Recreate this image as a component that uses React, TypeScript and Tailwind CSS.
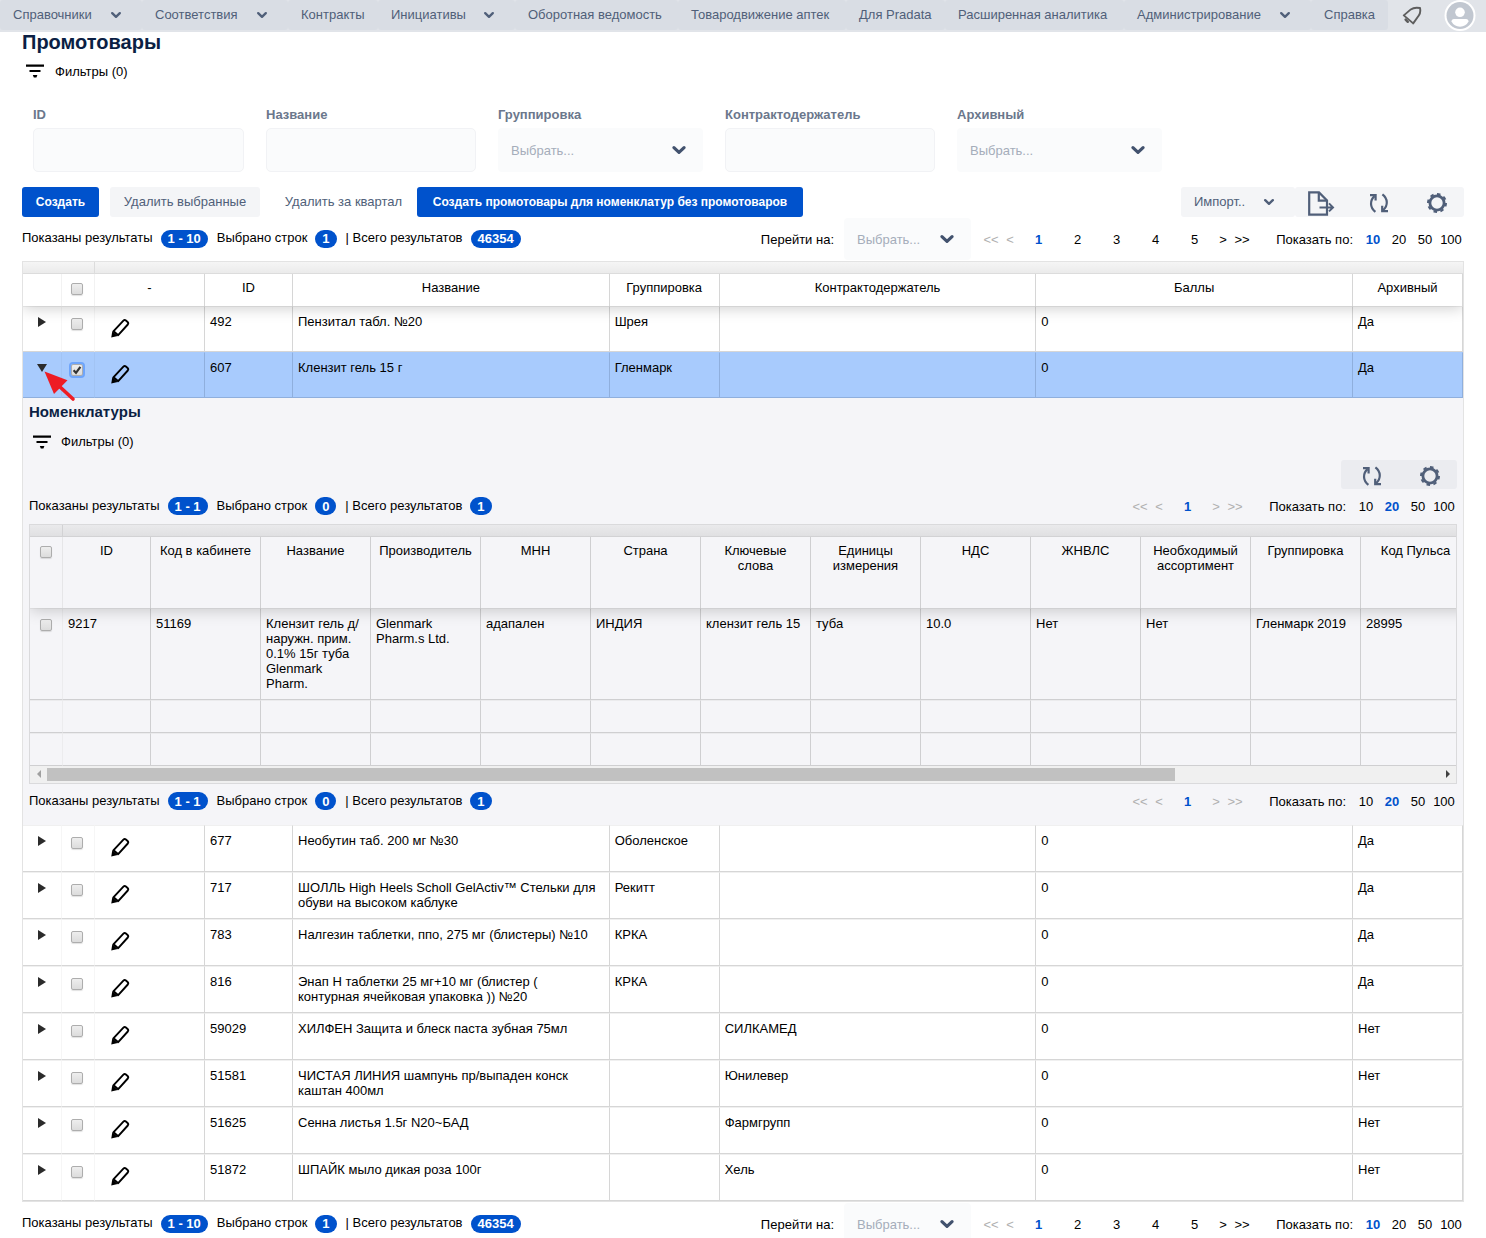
import React from "react";

type NavItem = { label: string; width: string; menu?: boolean };

const NAV: NavItem[] = [
  { label: "Справочники", width: "w-[142px]", menu: true },
  { label: "Соответствия", width: "w-[146px]", menu: true },
  { label: "Контракты", width: "w-[90px]" },
  { label: "Инициативы", width: "w-[137px]", menu: true },
  { label: "Оборотная ведомость", width: "w-[163px]" },
  { label: "Товародвижение аптек", width: "w-[168px]" },
  { label: "Для Pradata", width: "w-[99px]" },
  { label: "Расширенная аналитика", width: "w-[179px]" },
  { label: "Администрирование", width: "w-[187px]", menu: true },
  { label: "Справка", width: "w-[77px]" },
];

type Product = { id: string; name: string; group: string; holder: string; points: string; archived: string };

const TOP_ROWS: Product[] = [
  { id: "492", name: "Пензитал табл. №20", group: "Шрея", holder: "", points: "0", archived: "Да" },
];

const OPEN_ROW: Product = { id: "607", name: "Клензит гель 15 г", group: "Гленмарк", holder: "", points: "0", archived: "Да" };

const BOTTOM_ROWS: Product[] = [
  { id: "677", name: "Необутин таб. 200 мг №30", group: "Оболенское", holder: "", points: "0", archived: "Да" },
  { id: "717", name: "ШОЛЛЬ High Heels Scholl GelActiv™ Стельки для обуви на высоком каблуке", group: "Рекитт", holder: "", points: "0", archived: "Да" },
  { id: "783", name: "Налгезин таблетки, ппо, 275 мг (блистеры) №10", group: "КРКА", holder: "", points: "0", archived: "Да" },
  { id: "816", name: "Энап Н таблетки 25 мг+10 мг (блистер ( контурная ячейковая упаковка )) №20", group: "КРКА", holder: "", points: "0", archived: "Да" },
  { id: "59029", name: "ХИЛФЕН Защита и блеск паста зубная 75мл", group: "", holder: "СИЛКАМЕД", points: "0", archived: "Нет" },
  { id: "51581", name: "ЧИСТАЯ ЛИНИЯ шампунь пр/выпаден конск каштан 400мл", group: "", holder: "Юнилевер", points: "0", archived: "Нет" },
  { id: "51625", name: "Сенна листья 1.5г N20~БАД", group: "", holder: "Фармгрупп", points: "0", archived: "Нет" },
  { id: "51872", name: "ШПАЙК мыло дикая роза 100г", group: "", holder: "Хель", points: "0", archived: "Нет" },
];

const MAIN_HEADERS = ["-", "ID", "Название", "Группировка", "Контрактодержатель", "Баллы", "Архивный"];

const NESTED_HEADERS = [
  "ID", "Код в кабинете", "Название", "Производитель", "МНН", "Страна", "Ключевые слова",
  "Единицы измерения", "НДС", "ЖНВЛС", "Необходимый ассортимент", "Группировка", "Код Пульса",
];

const NESTED_ROW = [
  "9217", "51169", "Клензит гель д/наружн. прим. 0.1% 15г туба Glenmark Pharm.", "Glenmark Pharm.s Ltd.", "адапален",
  "ИНДИЯ", "клензит гель 15", "туба", "10.0", "Нет", "Нет", "Гленмарк 2019", "28995",
];

function Chevron({ className }: { className: string }) {
  return (
    <svg viewBox="0 0 12 12" className={className} fill="none" stroke="currentColor" strokeWidth="2.4" strokeLinecap="round" strokeLinejoin="round" aria-hidden="true">
      <path d="M2.2 4.2L6 7.8l3.8-3.6" />
    </svg>
  );
}

function FilterIcon() {
  return (
    <svg viewBox="0 0 20 16" className="h-4 w-5" aria-hidden="true">
      <path d="M1 2.6h18M4.5 8h11" stroke="#000" strokeWidth="2.2" fill="none" />
      <path d="M7.8 12h4.6l-1 2.4H8.8z" fill="#000" />
    </svg>
  );
}

function PencilIcon() {
  return (
    <svg viewBox="0 0 20 20" className="size-5" aria-hidden="true">
      <path d="M3.6 13.2L13.4 2.6Q14.6 1.4 15.9 2.5L17.6 4Q18.8 5.2 17.8 6.5L8.2 17.2Z" fill="none" stroke="#000" strokeWidth="1.9" strokeLinejoin="round" />
      <path d="M1.2 19.4L2.4 13 7.8 18Z" fill="#000" />
    </svg>
  );
}

function ExportIcon() {
  return (
    <svg viewBox="0 0 28 26" className="h-[26px] w-7" fill="none" stroke="#505f79" strokeWidth="2.2" aria-hidden="true">
      <path d="M2.2 2.4H12L20 10.4V24.6H2.2Z" />
      <path d="M11.8 2.4V10.6H20" />
      <path d="M12.5 17.4H26M22 13.4l4 4-4 4" strokeWidth="2" />
    </svg>
  );
}

function RefreshIcon() {
  return (
    <svg viewBox="0 0 20 20" className="size-5" fill="none" stroke="#505f79" strokeWidth="2.2" aria-hidden="true">
      <path d="M5.6 3.2C0.6 7.4 0.8 14.6 6.4 18.8" />
      <path d="M1 2.2H6.6V7.4" />
      <path d="M13.4 1.4C19 5.6 19.2 12.6 14.2 17" />
      <path d="M13.2 12.8V18.2H19" />
    </svg>
  );
}

function GearIcon() {
  return (
    <svg viewBox="0 0 20 20" className="size-5" fill="none" stroke="#505f79" aria-hidden="true">
      <circle cx="10" cy="10" r="7.1" strokeWidth="2.8" />
      <circle cx="10" cy="10" r="9" strokeWidth="2" pathLength="16" strokeDasharray="1 1" />
    </svg>
  );
}

function BellIcon() {
  return (
    <svg viewBox="0 0 20 20" className="size-5" fill="none" stroke="#5d5d5d" strokeWidth="1.9" strokeLinejoin="round" strokeLinecap="round" aria-hidden="true">
      <path d="M1.8 9.4L8.8 3.4Q12 1 18 2Q19 7 16.6 9.8L11.2 17.4Z" />
      <path d="M3.6 13.6l2.2 2.2" strokeWidth="2.4" />
    </svg>
  );
}

function Avatar() {
  return (
    <svg viewBox="0 0 32 32" className="size-8" aria-hidden="true">
      <circle cx="16" cy="15.5" r="15.5" fill="#fff" />
      <circle cx="16" cy="15.5" r="13.5" fill="#c1c7d0" />
      <circle cx="16" cy="12.3" r="4.8" fill="#fff" />
      <path d="M7.5 21.5q0-2.5 2.5-2.5h12q2.5 0 2.5 2.5q-2.5 5-8.5 5.2q-6-.2-8.5-5.2z" fill="#fff" />
    </svg>
  );
}

function Checkbox({ label, checked = false }: { label: string; checked?: boolean }) {
  return (
    <span className="relative inline-flex size-3">
      <input
        type="checkbox"
        aria-label={label}
        defaultChecked={checked}
        className="peer size-3 appearance-none rounded-[2px] border border-[#adadad] bg-linear-to-b from-[#eeeeee] to-[#dcdcdc] shadow-[0_1px_1px_rgba(0,0,0,0.12)] checked:outline-2 checked:outline-[#6ea5fb]"
      />
      <svg viewBox="0 0 12 12" className="pointer-events-none absolute inset-0 hidden size-3 peer-checked:block" fill="none" stroke="#333" strokeWidth="2.2" aria-hidden="true">
        <path d="M2.6 6.2l2.4 2.6 4.4-6" />
      </svg>
    </span>
  );
}

function FieldSelect({ id, className }: { id: string; className: string }) {
  return (
    <div className={`relative ${className}`}>
      <select id={id} className="size-full appearance-none rounded-[4px] bg-[#fafbfc] pl-[13px] text-[13px] text-[#a5adba]">
        <option>Выбрать...</option>
      </select>
      <Chevron className="pointer-events-none absolute top-1/2 right-4 size-4 -translate-y-1/2 text-[#42526e]" />
    </div>
  );
}

function Badge({ children }: { children: React.ReactNode }) {
  return <span className="mt-[2px] flex h-[18px] items-center rounded-full bg-[#0052cc] px-[7px] font-bold text-white">{children}</span>;
}

function ResultsBar({ range, selected, total, pages, size, jumpId, className }: {
  range: string; selected: string; total: string; pages: string[]; size: string; jumpId?: string; className: string;
}) {
  const last = pages.length === 1;
  const forward = last ? "text-[#b0b0b0]" : "text-black";
  return (
    <div className={`flex items-center justify-between ${className}`}>
      <div className="flex items-center gap-2 pb-[3px] whitespace-nowrap">
        <span>Показаны результаты</span>
        <Badge>{range}</Badge>
        <span className="ml-px">Выбрано строк</span>
        <Badge>{selected}</Badge>
        <span className="ml-px">| Всего результатов</span>
        <Badge>{total}</Badge>
      </div>
      <div className="flex h-full items-center whitespace-nowrap">
        {jumpId && (
          <>
            <label htmlFor={jumpId} className="mr-[10px]">Перейти на:</label>
            <FieldSelect id={jumpId} className="mr-[10px] h-[42px] w-[127px]" />
          </>
        )}
        <button className="w-5 text-[#b0b0b0]">&lt;&lt;</button>
        <button className="w-[18px] text-[#b0b0b0]">&lt;</button>
        {pages.map((p) => (
          <button key={p} className={p === "1" ? "w-[39px] font-bold text-[#0052cc]" : "w-[39px]"}>{p}</button>
        ))}
        <button className={`w-[18px] ${forward}`}>&gt;</button>
        <button className={`w-5 ${forward}`}>&gt;&gt;</button>
        <span className="w-[108px] pr-[7px] text-right">Показать по:</span>
        {["10", "20", "50", "100"].map((n) => (
          <button key={n} className={n === size ? "w-[26px] font-bold text-[#0052cc]" : "w-[26px]"}>{n}</button>
        ))}
      </div>
    </div>
  );
}

function ProductRow({ row, open = false }: { row: Product; open?: boolean }) {
  const line = open
    ? "border-t-[#a8cbfd] border-r-[#8fafdd] border-b-[#8fafdd]"
    : "border-t-[#f0f0f0] border-r-[#d6d6d6] border-b-[#d6d6d6]";
  const faint = open
    ? "border-t-[#a8cbfd] border-r-[#a2c4f4] border-b-[#8fafdd]"
    : "border-t-[#f0f0f0] border-r-[#f6f6f6] border-b-[#d6d6d6]";
  const edges = "border-t border-r border-b align-top";
  const cell = `${edges} px-[5px] pt-[7px] ${line}`;
  return (
    <tr className={open ? "h-[46px] bg-[#a8cbfd]" : "h-[47px] first:h-[46px]"}>
      <td className={`relative pt-[10px] ${edges} ${faint}`}>
        <button aria-label={open ? "Свернуть" : "Развернуть"} className="mx-auto flex h-[10px] w-3 items-center justify-center">
          <svg viewBox="0 0 10 10" className={open ? "size-[10px] rotate-90" : "size-[10px]"} aria-hidden="true">
            <path d="M1 0L9 5 1 10z" fill="#2b2b2b" />
          </svg>
        </button>
        {open && (
          <svg viewBox="0 0 32 31" className="absolute top-[18px] left-[21px] z-10 h-[31px] w-8" aria-hidden="true">
            <path d="M15 15L29 28" stroke="#ee1c24" strokeWidth="3.6" strokeLinecap="round" />
            <path d="M0.5 0.5L23.5 9.2 10 23z" fill="#ee1c24" />
          </svg>
        )}
      </td>
      <td className={`${edges} ${faint}`}>
        <div className="flex justify-center pt-[11px] pr-[2px]">
          <Checkbox label={`Выбрать ${row.id}`} checked={open} />
        </div>
      </td>
      <td className={`${edges} ${line}`}>
        <button aria-label={`Редактировать ${row.id}`} className="mt-[11px] ml-[15px] flex">
          <PencilIcon />
        </button>
      </td>
      <td className={cell}>{row.id}</td>
      <td className={`${edges} pt-[7px] pr-[10px] pl-[5px] ${line}`}>{row.name}</td>
      <td className={cell}>{row.group}</td>
      <td className={cell}>{row.holder}</td>
      <td className={cell}>{row.points}</td>
      <td className={cell}>{row.archived}</td>
    </tr>
  );
}

function NomenclatureTable() {
  const cell = "border-r border-r-[#cfcfd1] px-[5px] align-top";
  const rowEdges = "border-t border-b border-t-[#ebebed] border-b-[#cfcfd1]";
  return (
    <div className="border border-[#dadadc]">
      <div className="overflow-hidden">
        <table className="w-[1441px] table-fixed border-separate border-spacing-0">
          <colgroup>
            <col className="w-[33px]" />
            <col className="w-[88px]" />
            {NESTED_HEADERS.slice(1).map((h) => <col key={h} className="w-[110px]" />)}
          </colgroup>
          <thead className="relative z-10 bg-[#f5f5f8] shadow-[0_2px_15px_rgba(0,0,0,0.2)]">
            <tr className="h-3 bg-linear-to-b from-[#eaeaec] to-[#dfdfe1]">
              <td className="border-r border-b border-[#d2d2d4]" />
              <td colSpan={13} className="border-b border-[#d2d2d4]" />
            </tr>
            <tr className="h-[71px]">
              <th className="border-r border-[#e6e6e8] align-top">
                <div className="flex justify-center pt-[9px]"><Checkbox label="Выбрать все номенклатуры" /></div>
              </th>
              {NESTED_HEADERS.map((h) => (
                <th key={h} className={`${cell} pt-[6px] text-center font-normal`}>{h}</th>
              ))}
            </tr>
          </thead>
          <tbody>
            <tr className="h-[92px]">
              <td className={`border-r border-r-[#ececee] align-top ${rowEdges}`}>
                <div className="flex justify-center pt-[10px]"><Checkbox label="Выбрать 9217" /></div>
              </td>
              {NESTED_ROW.map((v, i) => <td key={i} className={`${cell} ${rowEdges} pt-[7px]`}>{v}</td>)}
            </tr>
            {[0, 1].map((r) => (
              <tr key={r} className="h-[33px]">
                <td className={`border-r border-r-[#ececee] ${rowEdges}`} />
                {NESTED_HEADERS.map((h) => <td key={h} className={`${cell} ${rowEdges}`} />)}
              </tr>
            ))}
          </tbody>
        </table>
      </div>
      <div className="flex h-[17px] items-center bg-[#f0f0f0] pb-px">
        <button aria-label="Прокрутить влево" className="flex w-[17px] justify-center">
          <svg viewBox="0 0 4 8" className="h-2 w-1" aria-hidden="true"><path d="M4 0v8L0 4z" fill="#a0a0a0" /></svg>
        </button>
        <div className="h-[13px] flex-1">
          <div className="h-full w-[81%] bg-[#c1c1c1]" />
        </div>
        <button aria-label="Прокрутить вправо" className="flex w-[17px] justify-center">
          <svg viewBox="0 0 4 8" className="h-2 w-1" aria-hidden="true"><path d="M0 0v8l4-4z" fill="#404040" /></svg>
        </button>
      </div>
    </div>
  );
}

function Nomenclatures() {
  return (
    <section className="px-[6px] pb-[6px]">
      <h2 className="flex h-7 items-center pb-px text-[15px] font-bold text-[#0b1f44]">Номенклатуры</h2>
      <button className="flex h-8 items-center gap-[9px] pb-px pl-[3px]">
        <FilterIcon />
        Фильтры (0)
      </button>
      <div className="mt-[2px] flex justify-end">
        <div className="flex h-[29px] rounded-[3px] bg-[#ebecf0]">
          <button aria-label="Обновить" className="flex w-[62px] items-center justify-center pt-[2px]"><RefreshIcon /></button>
          <button aria-label="Настройки" className="flex w-[54px] items-center justify-center pt-[2px]"><GearIcon /></button>
        </div>
      </div>
      <ResultsBar range="1 - 1" selected="0" total="1" pages={["1"]} size="20" className="h-[35px]" />
      <NomenclatureTable />
      <ResultsBar range="1 - 1" selected="0" total="1" pages={["1"]} size="20" className="h-[35px]" />
    </section>
  );
}

export default function App() {
  const allPages = ["1", "2", "3", "4", "5"];
  const label = "flex h-5 items-center font-bold text-[#6b778c]";
  const input = "mt-1 h-11 w-full rounded-[5px] border border-[#f1f2f5] bg-[#fafbfc] px-3 outline-none";
  return (
    <div className="bg-white font-['Liberation_Sans',Arial,sans-serif] text-[13px] leading-[15px] text-black">
      <header className="flex h-8 justify-between bg-[#e1e4e9]">
        <nav className="flex h-[30px] text-[#505f79]">
          {NAV.map((item) => (
            <button key={item.label} className={`flex items-center justify-between rounded-[3px] bg-[#d9dde4] pr-5 pb-px pl-[13px] whitespace-nowrap ${item.width}`}>
              {item.label}
              {item.menu && <Chevron className="size-3 shrink-0" />}
            </button>
          ))}
        </nav>
        <div className="flex items-center gap-[22px] pr-[10px]">
          <button aria-label="Уведомления"><BellIcon /></button>
          <button aria-label="Профиль"><Avatar /></button>
        </div>
      </header>

      <main className="px-[22px]">
        <h1 className="flex h-5 items-center text-xl leading-5 font-bold text-[#0b1f44]">Промотовары</h1>
        <button className="flex h-10 items-center gap-[10px] pb-[2px] pl-[3px]">
          <FilterIcon />
          Фильтры (0)
        </button>

        <form className="mt-3 flex gap-[22px] pl-[11px]">
          <div className="w-[211px]">
            <label htmlFor="f-id" className={label}>ID</label>
            <input id="f-id" type="text" className={input} />
          </div>
          <div className="w-[210px]">
            <label htmlFor="f-name" className={label}>Название</label>
            <input id="f-name" type="text" className={input} />
          </div>
          <div className="w-[205px]">
            <label htmlFor="f-group" className={label}>Группировка</label>
            <FieldSelect id="f-group" className="mt-1 h-11" />
          </div>
          <div className="w-[210px]">
            <label htmlFor="f-holder" className={label}>Контрактодержатель</label>
            <input id="f-holder" type="text" className={input} />
          </div>
          <div className="w-[205px]">
            <label htmlFor="f-arch" className={label}>Архивный</label>
            <FieldSelect id="f-arch" className="mt-1 h-11" />
          </div>
        </form>

        <div className="mt-[15px] flex h-[30px] justify-between whitespace-nowrap">
          <div className="flex">
            <button className="w-[77px] rounded-[3px] bg-[#0052cc] pb-px text-xs font-bold text-white">Создать</button>
            <button className="ml-[11px] w-[150px] rounded-[3px] bg-[#f4f5f7] pb-px text-[#505f79]">Удалить выбранные</button>
            <button className="ml-[10px] w-[147px] pb-px text-[#505f79]">Удалить за квартал</button>
            <button className="w-[386px] rounded-[3px] bg-[#0052cc] pb-px text-xs font-bold text-white">Создать промотовары для номенклатур без промотоваров</button>
          </div>
          <div className="flex">
            <button className="flex w-[114px] items-center justify-between rounded-[3px] bg-[#f4f5f7] pr-5 pb-px pl-[13px] text-[#505f79]">
              Импорт..
              <Chevron className="size-3" />
            </button>
            <div className="flex rounded-[3px] bg-[#f4f5f7]">
              <button aria-label="Экспорт" className="flex w-[52px] items-center justify-center pt-[2px]"><ExportIcon /></button>
              <button aria-label="Обновить" className="flex w-[63px] items-center justify-center pt-[2px]"><RefreshIcon /></button>
              <button aria-label="Настройки" className="flex w-[54px] items-center justify-center pt-[2px]"><GearIcon /></button>
            </div>
          </div>
        </div>

        <ResultsBar range="1 - 10" selected="1" total="46354" pages={allPages} size="10" jumpId="jump-top" className="h-11" />

        <div className="overflow-hidden border border-[#e3e3e3]">
          <table className="w-full table-fixed border-separate border-spacing-0">
            <colgroup>
              <col className="w-[39px]" />
              <col className="w-[33px]" />
              <col className="w-[110px]" />
              <col className="w-[88px]" />
              <col />
              <col className="w-[110px]" />
              <col />
              <col />
              <col className="w-[110px]" />
            </colgroup>
            <thead className="relative z-10 bg-white shadow-[0_2px_15px_rgba(0,0,0,0.2)]">
              <tr className="h-3 bg-linear-to-b from-[#f5f5f5] to-[#eaeaea]">
                <td colSpan={2} className="border-r border-b border-[#dcdcdc]" />
                <td colSpan={7} className="border-b border-[#dcdcdc]" />
              </tr>
              <tr className="h-8">
                <th className="border-r border-[#f2f2f2]" />
                <th className="border-r border-[#f2f2f2] align-top">
                  <div className="flex justify-center pt-[9px] pr-[2px]"><Checkbox label="Выбрать все" /></div>
                </th>
                {MAIN_HEADERS.map((h) => (
                  <th key={h} className="border-r border-[#d6d6d6] px-[5px] pt-[6px] align-top font-normal">{h}</th>
                ))}
              </tr>
            </thead>
            <tbody>
              {TOP_ROWS.map((r) => <ProductRow key={r.id} row={r} />)}
              <ProductRow row={OPEN_ROW} open />
              <tr>
                <td colSpan={9} className="bg-[#f5f5f8] p-0"><Nomenclatures /></td>
              </tr>
              {BOTTOM_ROWS.map((r) => <ProductRow key={r.id} row={r} />)}
            </tbody>
          </table>
        </div>

        <div className="h-9 overflow-hidden">
          <ResultsBar range="1 - 10" selected="1" total="46354" pages={allPages} size="10" jumpId="jump-bottom" className="h-11" />
        </div>
      </main>
    </div>
  );
}
